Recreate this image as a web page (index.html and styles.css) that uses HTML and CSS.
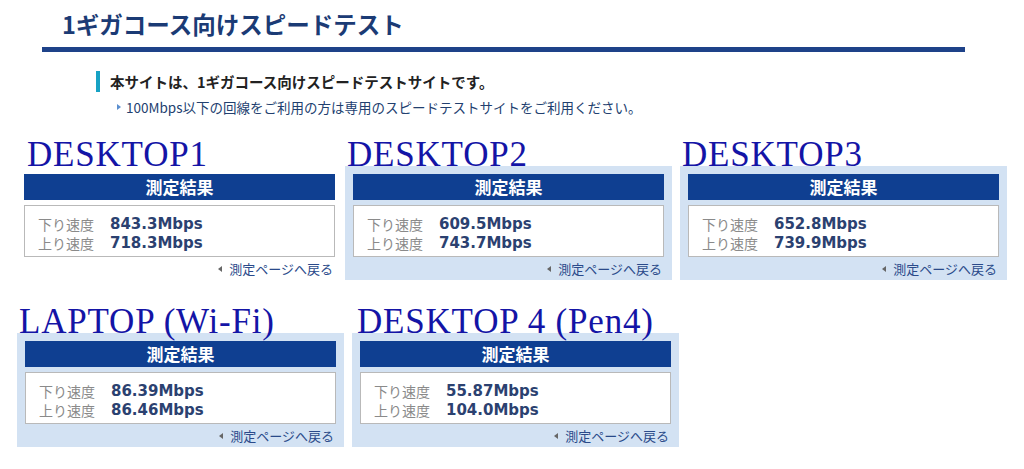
FILE: index.html
```html
<!DOCTYPE html>
<html lang="ja">

<head>
    <meta charset="UTF-8">
    <title>1ギガコース向けスピードテスト 結果</title>
    <link rel="stylesheet" href="styles.css">
</head>

<body>
    <!-- ページ見出し -->
    <div class="title">1ギガコース向けスピードテスト</div>

    <div class="lead">本サイトは、1ギガコース向けスピードテストサイトです。</div>
    <div class="note"><span class="tri-r"></span>100Mbps以下の回線をご利用の方は専用のスピードテストサイトをご利用ください。</div>

    <!-- 結果 1段目 -->
    <div class="row row1">
        <div class="card first">
            <div class="label">DESKTOP1</div>
            <div class="panel plain">
                <div class="head">測定結果</div>
                <div class="box">
                    <div class="line"><span class="k">下り速度</span><span class="v">843.3Mbps</span></div>
                    <div class="line"><span class="k">上り速度</span><span class="v">718.3Mbps</span></div>
                </div>
                <div class="back"><span class="tri-l"></span>測定ページへ戻る</div>
            </div>
        </div>
        <div class="card second">
            <div class="label">DESKTOP2</div>
            <div class="panel">
                <div class="head">測定結果</div>
                <div class="box">
                    <div class="line"><span class="k">下り速度</span><span class="v">609.5Mbps</span></div>
                    <div class="line"><span class="k">上り速度</span><span class="v">743.7Mbps</span></div>
                </div>
                <div class="back"><span class="tri-l"></span>測定ページへ戻る</div>
            </div>
        </div>
        <div class="card third">
            <div class="label">DESKTOP3</div>
            <div class="panel">
                <div class="head">測定結果</div>
                <div class="box">
                    <div class="line"><span class="k">下り速度</span><span class="v">652.8Mbps</span></div>
                    <div class="line"><span class="k">上り速度</span><span class="v">739.9Mbps</span></div>
                </div>
                <div class="back"><span class="tri-l"></span>測定ページへ戻る</div>
            </div>
        </div>
    </div>

    <!-- 結果 2段目 -->
    <div class="row row2">
        <div class="card">
            <div class="label">LAPTOP (Wi-Fi)</div>
            <div class="panel">
                <div class="head">測定結果</div>
                <div class="box">
                    <div class="line"><span class="k">下り速度</span><span class="v">86.39Mbps</span></div>
                    <div class="line"><span class="k">上り速度</span><span class="v">86.46Mbps</span></div>
                </div>
                <div class="back"><span class="tri-l"></span>測定ページへ戻る</div>
            </div>
        </div>
        <div class="card fifth">
            <div class="label">DESKTOP 4 (Pen4)</div>
            <div class="panel">
                <div class="head">測定結果</div>
                <div class="box">
                    <div class="line"><span class="k">下り速度</span><span class="v">55.87Mbps</span></div>
                    <div class="line"><span class="k">上り速度</span><span class="v">104.0Mbps</span></div>
                </div>
                <div class="back"><span class="tri-l"></span>測定ページへ戻る</div>
            </div>
        </div>
    </div>
</body>

</html>
```

FILE: styles.css
```css
body {
    /*全体*/
    margin: 0;
    background: #ffffff;
    font-family: "Noto Sans CJK JP", "Noto Sans", sans-serif;
}

.title {
    /*見出し＋下線*/
    width: 903px;
    margin-left: 42px;
    padding: 9px 0 8px 20px;
    line-height: 30px;
    font-size: 23.5px;
    font-weight: bold;
    color: #1b3b75;
    border-bottom: 5px solid #1e4289;
}

.lead {
    /*水色の縦線つき説明*/
    margin: 19px 0 0 96px;
    padding-left: 10px;
    border-left: 4px solid #17a2c4;
    line-height: 21px;
    font-size: 14.5px;
    font-weight: bold;
    color: #222222;
}

.note {
    margin: 5px 0 0 117px;
    line-height: 20px;
    font-size: 13.5px;
    color: #22406f;
    display: flex;
    align-items: center;
}

.tri-r {
    width: 0;
    height: 0;
    border-top: 3px solid transparent;
    border-bottom: 3px solid transparent;
    border-left: 4px solid #5b8fcf;
    margin-right: 5px;
}

.row {
    display: flex;
    align-items: flex-start;
}

.row1 {
    margin-top: 25px;
    padding-left: 16px;
}

.row2 {
    margin-top: 29px;
    padding-left: 17px;
}

.card {
    width: 327px;
}

.second {
    margin-left: 2px;
}

.third {
    margin-left: 8px;
}

.fifth {
    margin-left: 8px;
}

.label {
    /*手書き風の機種名*/
    font-family: "Liberation Serif", serif;
    font-size: 35px;
    letter-spacing: 0.8px;
    line-height: 22px;
    height: 22px;
    padding-top: 2px;
    padding-left: 2px;
    color: #1414a6;
    white-space: nowrap;
}

.first .label {
    padding-left: 11px;
}

.fifth .label {
    padding-left: 5px;
}

.panel {
    background: #d3e2f3;
    padding: 8px 8px 1px 8px;
}

.panel.plain {
    background: #ffffff;
}

.head {
    height: 26px;
    line-height: 26px;
    background: #0f3f91;
    color: #ffffff;
    text-align: center;
    font-size: 17px;
    font-weight: bold;
}

.box {
    margin-top: 5px;
    height: 50px;
    box-sizing: content-box;
    background: #ffffff;
    border: 1px solid #b9b9b9;
    padding: 0 13px;
}

.box .line:first-child {
    margin-top: 8px;
}

.line {
    display: flex;
    align-items: center;
    height: 19px;
}

.k {
    width: 57px;
    font-size: 14px;
    color: #8a8a8a;
}

.v {
    margin-left: 15px;
    font-family: "DejaVu Sans", sans-serif;
    font-size: 15px;
    font-weight: bold;
    color: #2b4170;
}

.back {
    margin-top: 2px;
    line-height: 20px;
    height: 20px;
    font-size: 13px;
    color: #2a4a8a;
    display: flex;
    justify-content: flex-end;
    align-items: center;
    padding-right: 2px;
}

.tri-l {
    width: 0;
    height: 0;
    border-top: 3px solid transparent;
    border-bottom: 3px solid transparent;
    border-right: 4px solid #666666;
    margin-right: 7px;
}
```
